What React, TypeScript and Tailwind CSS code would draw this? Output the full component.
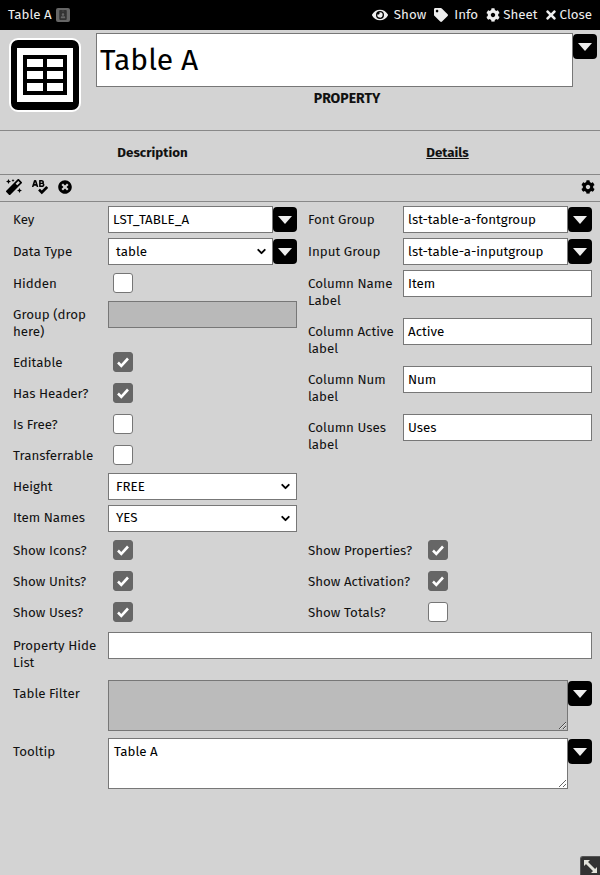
import { ChevronDown } from "lucide-react";
import { FaCog, FaEye, FaIdBadge, FaMagic, FaSpellCheck, FaTag, FaTimes, FaTimesCircle } from "react-icons/fa";

const font = "font-['Fira_Sans','Noto_Sans',sans-serif]";

function DropButton({ className = "" }: { className?: string }) {
  return (
    <button className={`flex h-[25px] w-[24px] shrink-0 items-center justify-center rounded-[4px] bg-black ${className}`}>
      <svg width="14" height="8" viewBox="0 0 14 8">
        <path d="M0 0h14L7 8z" fill="#eee" />
      </svg>
    </button>
  );
}

function Check({ checked = false }: { checked?: boolean }) {
  return (
    <span className={`ml-[5px] flex h-[20px] w-[20px] items-center justify-center rounded-[3px] border ${checked ? "border-[#666] bg-[#666]" : "border-[#767676] bg-white"}`}>
      {checked && (
        <svg width="14" height="14" viewBox="0 0 14 14">
          <path d="M2 7.5l3.3 3.3L12 3.5" fill="none" stroke="#fff" strokeWidth="2.6" />
        </svg>
      )}
    </span>
  );
}

function TextBox({ value, className = "" }: { value: string; className?: string }) {
  return (
    <div className={`flex h-[27px] items-center border border-[#777] bg-white px-[4px] pt-[2px] text-black ${className}`}>
      {value}
    </div>
  );
}

function SelectBox({ value, className = "", textClass = "pt-[2px]" }: { value: string; className?: string; textClass?: string }) {
  return (
    <div className={`flex h-[27px] items-center justify-between border border-[#777] bg-white pl-[7px] pr-[4px] text-black ${className}`}>
      <span className={textClass}>{value}</span>
      <ChevronDown size={13} strokeWidth={3.5} />
    </div>
  );
}

function CheckRow({ label, checked, wide, className = "" }: { label: string; checked?: boolean; wide?: boolean; className?: string }) {
  return (
    <div className={`flex h-[20px] items-center ${className}`}>
      <span className={`shrink-0 pt-[2px] ${wide ? "w-[115px]" : "w-[95px]"}`}>{label}</span>
      <Check checked={checked} />
    </div>
  );
}

function ColumnLabel({ label, value, className = "" }: { label: string; value: string; className?: string }) {
  return (
    <div className={`flex h-[42px] items-start ${className}`}>
      <span className="w-[95px] shrink-0 pt-[6px] leading-[17px]">{label}</span>
      <TextBox value={value} className="w-[189px]" />
    </div>
  );
}

export default function App() {
  return (
    <div className={`${font} flex h-[875px] w-[600px] flex-col overflow-hidden bg-[#d3d3d3] text-[13.33px] leading-[17px] text-[#111]`}>
      <header className="flex h-[30px] shrink-0 items-center justify-between bg-black px-[8px] text-[#eee]">
        <div className="flex items-center gap-[4px]">
          <span>Table A</span>
          <span className="flex h-[14px] w-[14px] items-center justify-center rounded-[2px] bg-[#666]">
            <FaIdBadge size={10} color="#333" />
          </span>
        </div>
        <nav className="flex items-center">
          <FaEye size={16} className="mr-[6px]" />
          <span className="mr-[8px]">Show</span>
          <FaTag size={14} className="mr-[6px]" />
          <span className="mr-[8px]">Info</span>
          <FaCog size={14} className="mr-[3px]" />
          <span className="mr-[6px]">Sheet</span>
          <FaTimes size={14} className="mr-[2px]" />
          <span>Close</span>
        </nav>
      </header>

      <section className="flex h-[100px] shrink-0">
        <div className="ml-[9px] mt-[8px] flex h-[74px] w-[72px] shrink-0 items-center justify-center rounded-[9px] border-2 border-white bg-black">
          <div className="flex h-[54px] w-[56px] items-center justify-center bg-white">
            <div className="grid h-[40px] w-[44px] grid-cols-2 grid-rows-3 gap-[4px] bg-black p-[4px]">
              <span className="bg-white" />
              <span className="bg-white" />
              <span className="bg-white" />
              <span className="bg-white" />
              <span className="bg-white" />
              <span className="bg-white" />
            </div>
          </div>
        </div>
        <div className="ml-[15px] mt-[3px] flex w-[477px] shrink-0 flex-col">
          <div className="flex h-[54px] items-center border border-[#777] bg-white px-[3px] text-[30px] text-black">Table A</div>
          <div className="mt-[3px] pl-[25px] text-center text-[14px] font-bold">PROPERTY</div>
        </div>
        <DropButton className="mt-[4px]" />
      </section>

      <div className="flex h-[45px] shrink-0 items-center border-y border-[#888] pt-[2px] font-bold">
        <span className="w-[305px] text-center">Description</span>
        <span className="w-[285px] text-center underline">Details</span>
      </div>

      <div className="flex h-[27px] shrink-0 items-center justify-between border-b border-[#888] pb-[2px] pl-[6px] pr-[5px] text-black">
        <div className="flex items-center gap-[10px]">
          <FaMagic size={16} />
          <FaSpellCheck size={16} />
          <FaTimesCircle size={14} />
        </div>
        <FaCog size={14} />
      </div>

      <main className="relative flex min-h-0 flex-1 flex-col pl-[13px] pt-[4px]">
        <div className="flex">
          <div className="flex w-[295px] shrink-0 flex-col">
            <div className="flex items-center">
              <span className="w-[95px] shrink-0 pt-[2px]">Key</span>
              <TextBox value="LST_TABLE_A" className="w-[165px]" />
              <DropButton />
            </div>
            <div className="mt-[5px] flex items-center">
              <span className="w-[95px] shrink-0 pt-[2px]">Data Type</span>
              <SelectBox value="table" className="w-[165px]" />
              <DropButton />
            </div>
            <CheckRow label="Hidden" className="mt-[8px]" />
            <div className="mt-[8px] flex h-[42px] items-start">
              <span className="w-[95px] shrink-0 pt-[6px] leading-[17px]">Group (drop here)</span>
              <div className="h-[27px] w-[189px] border border-[#777] bg-[#b9b9b9]" />
            </div>
            <CheckRow label="Editable" checked className="mt-[9px]" />
            <CheckRow label="Has Header?" checked className="mt-[11px]" />
            <CheckRow label="Is Free?" className="mt-[11px]" />
            <CheckRow label="Transferrable" className="mt-[11px]" />
            <div className="mt-[8px] flex items-center">
              <span className="w-[95px] shrink-0 pt-[2px]">Height</span>
              <SelectBox value="FREE" className="w-[189px]" />
            </div>
            <div className="mt-[5px] flex items-center">
              <span className="w-[95px] shrink-0">Item Names</span>
              <SelectBox value="YES" textClass="" className="w-[189px]" />
            </div>
          </div>

          <div className="flex flex-1 flex-col">
            <div className="flex items-center">
              <span className="w-[95px] shrink-0 pt-[2px]">Font Group</span>
              <TextBox value="lst-table-a-fontgroup" className="w-[165px]" />
              <DropButton />
            </div>
            <div className="mt-[5px] flex items-center">
              <span className="w-[95px] shrink-0 pt-[2px]">Input Group</span>
              <TextBox value="lst-table-a-inputgroup" className="w-[165px]" />
              <DropButton />
            </div>
            <ColumnLabel label="Column Name Label" value="Item" className="mt-[5px]" />
            <ColumnLabel label="Column Active label" value="Active" className="mt-[6px]" />
            <ColumnLabel label="Column Num label" value="Num" className="mt-[6px]" />
            <ColumnLabel label="Column Uses label" value="Uses" className="mt-[6px]" />
          </div>
        </div>

        <div className="mt-[8px] grid w-[440px] grid-cols-[295px_1fr] gap-y-[11px]">
          <CheckRow label="Show Icons?" checked />
          <CheckRow label="Show Properties?" checked wide />
          <CheckRow label="Show Units?" checked />
          <CheckRow label="Show Activation?" checked wide />
          <CheckRow label="Show Uses?" checked />
          <CheckRow label="Show Totals?" wide />
        </div>

        <div className="mt-[10px] flex items-start">
          <span className="w-[95px] shrink-0 pt-[6px] leading-[17px]">Property Hide List</span>
          <TextBox value="" className="w-[484px]" />
        </div>

        <div className="mt-[8px] flex items-start">
          <span className="w-[95px] shrink-0 pt-[6px]">Table Filter</span>
          <textarea readOnly className="h-[51px] w-[460px] border border-[#777] bg-[#bbb] px-[5px] py-[5px]" />
          <DropButton className="mt-[1px]" />
        </div>

        <div className="mt-[7px] flex items-start">
          <span className="w-[95px] shrink-0 pt-[6px]">Tooltip</span>
          <textarea readOnly value="Table A" className="h-[51px] w-[460px] border border-[#777] bg-white px-[5px] py-[5px] text-black" />
          <DropButton className="mt-[1px]" />
        </div>

        <button className="absolute bottom-0 right-0 flex h-[19px] w-[20px] items-center justify-center rounded-tl-[3px] border-l border-t border-[#555] bg-[#333]">
          <svg width="15" height="15" viewBox="0 0 15 15">
            <path d="M1 1h6L1 7zM14 14H8l6-6z" fill="#e4e4dc" />
            <path d="M3.5 3.5l8 8" stroke="#e4e4dc" strokeWidth="3" />
          </svg>
        </button>
      </main>
    </div>
  );
}
